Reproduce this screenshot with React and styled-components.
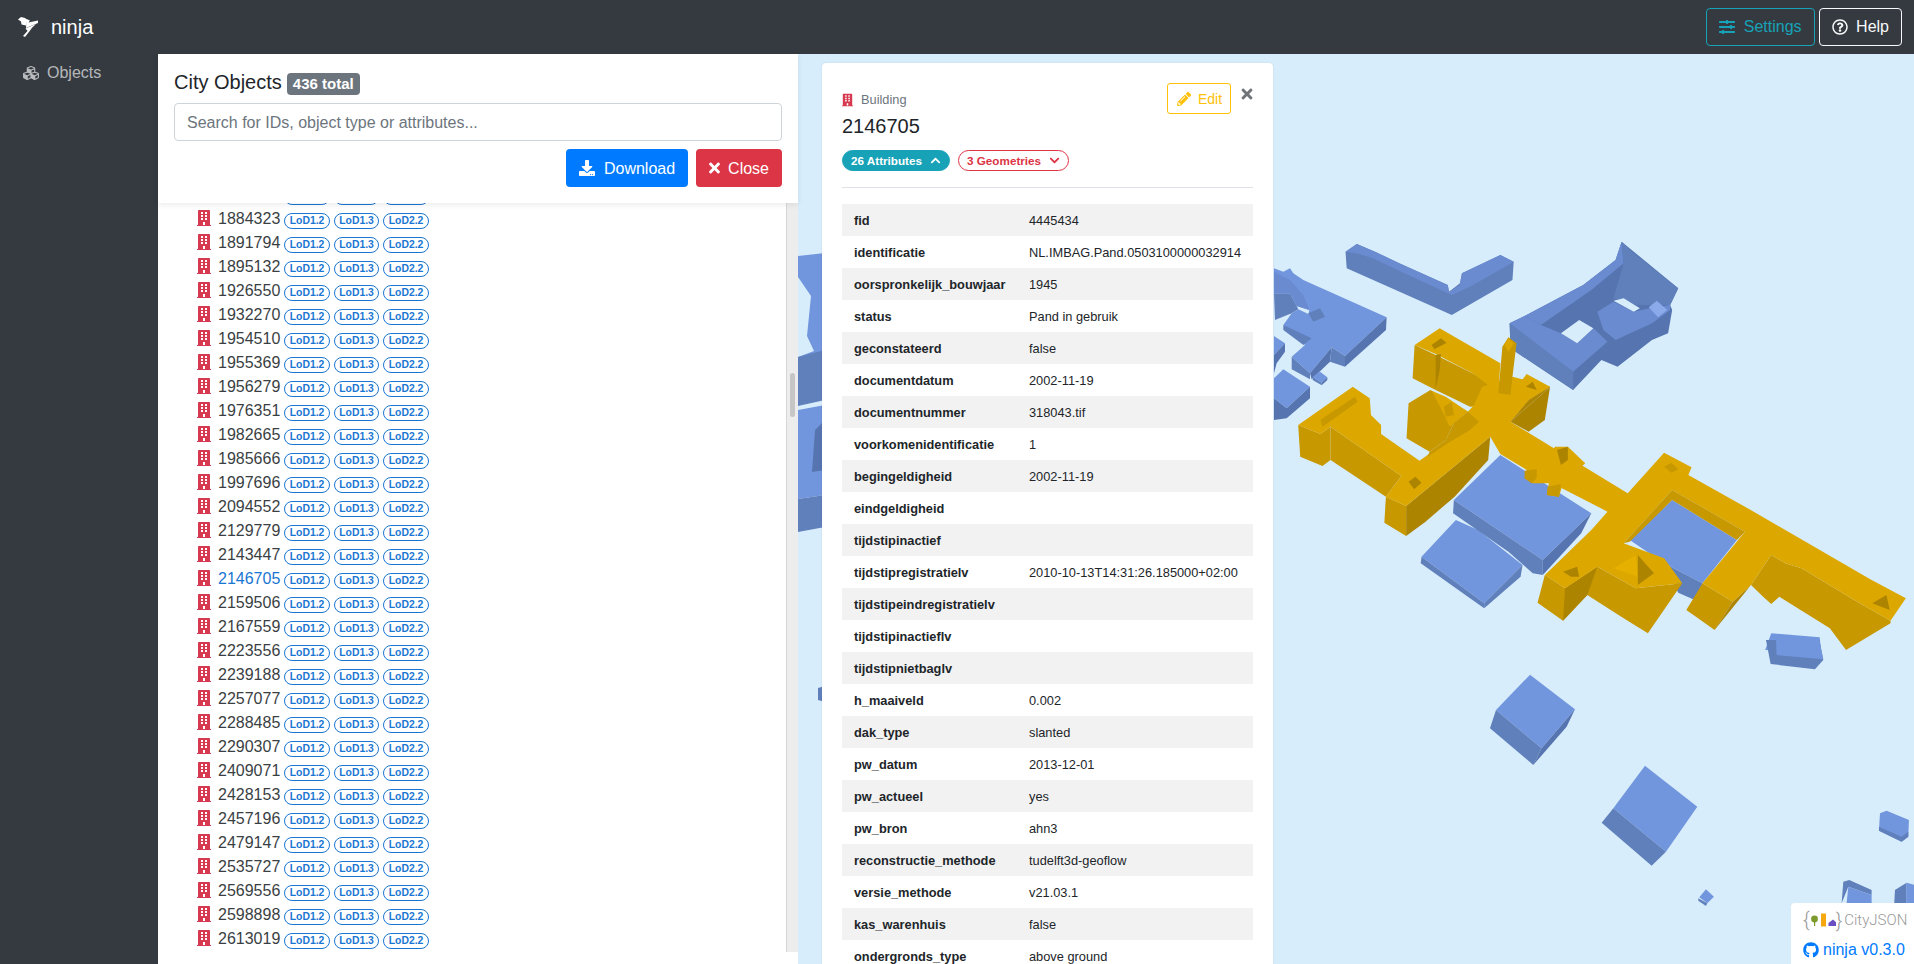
import React from "react";
import styled, { createGlobalStyle } from "styled-components";
import {
  FaBuilding,
  FaChevronDown,
  FaChevronUp,
  FaCubes,
  FaDownload,
  FaGithub,
  FaPencilAlt,
  FaRegQuestionCircle,
  FaSlidersH,
  FaTimes,
} from "react-icons/fa";

const IDS = [
  "1877412", "1884323", "1891794", "1895132", "1926550", "1932270", "1954510", "1955369",
  "1956279", "1976351", "1982665", "1985666", "1997696", "2094552", "2129779", "2143447",
  "2146705", "2159506", "2167559", "2223556", "2239188", "2257077", "2288485", "2290307",
  "2409071", "2428153", "2457196", "2479147", "2535727", "2569556", "2598898", "2613019",
];

const ATTRIBUTES = [
  ["fid", "4445434"],
  ["identificatie", "NL.IMBAG.Pand.0503100000032914"],
  ["oorspronkelijk_bouwjaar", "1945"],
  ["status", "Pand in gebruik"],
  ["geconstateerd", "false"],
  ["documentdatum", "2002-11-19"],
  ["documentnummer", "318043.tif"],
  ["voorkomenidentificatie", "1"],
  ["begingeldigheid", "2002-11-19"],
  ["eindgeldigheid", ""],
  ["tijdstipinactief", ""],
  ["tijdstipregistratielv", "2010-10-13T14:31:26.185000+02:00"],
  ["tijdstipeindregistratielv", ""],
  ["tijdstipinactieflv", ""],
  ["tijdstipnietbaglv", ""],
  ["h_maaiveld", "0.002"],
  ["dak_type", "slanted"],
  ["pw_datum", "2013-12-01"],
  ["pw_actueel", "yes"],
  ["pw_bron", "ahn3"],
  ["reconstructie_methode", "tudelft3d-geoflow"],
  ["versie_methode", "v21.03.1"],
  ["kas_warenhuis", "false"],
  ["ondergronds_type", "above ground"],
];

const SKY = "#d8edfc";
const BLUE_TOP = "#7296dd";
const BLUE_MID = "#6a8bd0";
const BLUE_SIDE = "#6080bc";
const BLUE_DARK = "#5675b0";
const GOLD_TOP = "#dca800";
const GOLD_SIDE = "#c79800";
const GOLD_DARK = "#ad8400";

// left block, 3x crop units
const LEFT_BLOCK = [
  [BLUE_SIDE, "12,190 60,190 80,228 85,238 65,250 15,270"],
  [BLUE_TOP, "12,115 40,125 60,115 70,130 100,150 350,262 225,378 185,352 120,430 65,380 105,345 40,285 65,250 85,238 115,252 118,240 80,228 60,190 12,190"],
  [BLUE_MID, "12,125 60,150 100,195 118,240 80,228 60,190 12,190"],
  [BLUE_SIDE, "115,250 150,235 165,260 130,275"],
  [BLUE_SIDE, "40,285 125,325 100,345 40,300"],
  [BLUE_SIDE, "65,380 120,430 120,448 65,418"],
  [BLUE_DARK, "120,430 185,352 180,395 125,448"],
  [BLUE_SIDE, "185,352 225,378 225,410 180,395"],
  [BLUE_DARK, "225,378 350,262 348,300 225,410"],
  [BLUE_TOP, "128,440 150,425 172,442 155,458"],
  [BLUE_SIDE, "128,440 155,458 155,466 128,450"],
  [BLUE_DARK, "155,458 172,442 172,450 155,466"],
  [BLUE_TOP, "12,318 45,340 12,375"],
  [BLUE_DARK, "12,375 45,340 45,365 20,400 12,430"],
  [BLUE_TOP, "12,445 40,418 120,470 50,535 12,505"],
  [BLUE_DARK, "12,505 50,535 120,470 120,505 50,565 12,570"],
];

// everything right of the card, 1568 wide crop units
const CITY = [
  // long building
  [BLUE_SIDE, "162,65 190,42 235,65 295,100 415,165 418,185 445,160 450,130 545,75 578,95 575,150 425,255 165,115"],
  [BLUE_MID, "162,65 190,42 235,65 295,100 415,165 418,185 445,165 450,130 545,75 578,95 470,170 425,195 300,125 230,85 190,70"],
  // courtyard building top right
  [BLUE_DARK, "568,280 605,258 750,165 830,90 845,35 985,175 965,225 970,240 960,310 920,330 835,410 795,390 725,480 570,355"],
  [BLUE_SIDE, "568,280 725,425 725,480 570,355"],
  [BLUE_MID, "568,280 605,258 645,285 695,310 735,340 775,295 810,335 725,425"],
  [BLUE_MID, "605,258 750,165 830,90 845,35 850,100 770,180 645,285"],
  [BLUE_SIDE, "845,35 875,70 985,175 965,225 880,225 825,205 850,100"],
  [BLUE_MID, "785,245 825,215 875,245 915,235 965,225 965,240 920,280 830,330 800,300"],
  [SKY, "695,310 740,270 775,295 735,340"],
  [SKY, "825,212 850,205 890,235 875,245"],
  ["#8aaaea", "912,232 932,212 958,240 935,262"],
  // courtyard blue
  [BLUE_TOP, "970,810 1130,930 1045,1060 950,1000 865,930"],
  [BLUE_SIDE, "950,1000 1045,1060 1030,1112 985,1088"],
  // lower blue
  [BLUE_TOP, "350,980 435,870 490,900 600,1005 505,1120"],
  [BLUE_SIDE, "350,980 505,1120 505,1135 470,1105 348,1000"],
  [BLUE_SIDE, "600,1005 505,1120 505,1135 595,1040"],
  // centre blue
  [BLUE_TOP, "545,675 770,850 650,990 430,810"],
  [BLUE_SIDE, "430,810 650,990 650,1035 625,1030 565,965 428,850"],
  [BLUE_DARK, "770,850 650,990 650,1035 745,910"],
  // gold walls
  [GOLD_SIDE, "333,345 385,375 480,432 540,480 520,525 470,530 440,512 385,480 328,445"],
  [GOLD_SIDE, "318,520 372,480 465,545 430,580 410,630 370,665 313,625"],
  [GOLD_TOP, "333,345 395,295 545,400 540,490 480,432 385,372"],
  [GOLD_TOP, "375,482 410,500 465,545 420,590 400,540"],
  [GOLD_DARK, "385,375 398,372 395,420 385,476"],
  [GOLD_SIDE, "45,585 100,612 125,590 125,690 105,708 50,680"],
  [GOLD_SIDE, "125,590 300,738 262,800 125,690"],
  [GOLD_SIDE, "262,800 312,828 312,918 258,878"],
  [GOLD_DARK, "312,828 520,620 515,690 432,800 360,875 312,918"],
  [GOLD_DARK, "570,575 660,480 668,470 655,570 615,605"],
  [GOLD_SIDE, "655,1035 705,1075 785,1010 880,1075 995,1060 910,1210 850,1165 760,1095 700,1172 637,1118"],
  [GOLD_DARK, "705,1075 785,1010 760,1095 700,1172"],
  [GOLD_SIDE, "1045,1060 1120,1115 1075,1200 1005,1140"],
  [GOLD_DARK, "1120,1115 1165,1065 1075,1200"],
  [GOLD_SIDE, "1510,1172 1420,1110 1290,1015 1250,1000 1215,975 1165,1065 1195,1100 1215,1122 1235,1100 1360,1195 1400,1260 1510,1180"],
  // gold roof, and the inner wall of its courtyard
  [GOLD_TOP, "45,585 180,470 222,505 225,555 250,585 250,612 345,692 365,675 415,630 470,585 515,550 540,495 575,490 610,432 668,470 615,510 570,575 860,790 950,668 1018,712 1010,735 1150,830 1460,1048 1548,1105 1510,1172 1420,1110 1290,1015 1250,1000 1215,975 1165,1065 1120,1115 1045,1060 1150,905 970,780 850,940 950,985 995,1060 880,1075 785,1010 705,1075 655,1035 770,900 810,845 690,770 610,720 545,672 520,620 312,828 262,800 300,738 125,590 100,612"],
  [GOLD_SIDE, "970,780 1150,905 1130,930 970,810 865,935 850,940"],
  // fills round the crossing, then the tower on top
  [GOLD_SIDE, "370,665 410,630 430,580 465,545 515,550 470,600 415,640 365,680"],
  [GOLD_TOP, "465,545 480,525 500,470 575,440 668,470 615,510 570,575 515,600"],
  [GOLD_DARK, "570,575 615,510 668,470 660,480"],
  [GOLD_SIDE, "540,490 550,350 565,322 585,340 575,440 570,495"],
  [GOLD_TOP, "555,345 565,325 578,340 565,365"],
  [GOLD_SIDE, "100,570 185,500 192,515 105,590"],
  [GOLD_DARK, "375,345 398,325 412,338 382,358"],
  [GOLD_DARK, "318,755 335,740 350,758 332,778"],
  // ornaments over the centre blue
  [GOLD_TOP, "655,700 680,650 712,650 755,700 700,760 690,800 660,795 665,760 625,760 605,745 610,720"],
  [GOLD_SIDE, "605,722 635,718 635,745 622,760 605,745"],
  [GOLD_SIDE, "662,770 695,762 690,800 660,795"],
  [GOLD_DARK, "685,660 712,650 712,690 695,705"],
  [GOLD_SIDE, "950,710 968,698 985,718 968,728"],
  [GOLD_DARK, "700,1025 735,1010 740,1040 720,1040"],
  ["#e5b000", "825,1015 880,975 885,1040"],
  [GOLD_DARK, "885,975 925,1030 885,1065"],
  [GOLD_DARK, "1465,1120 1500,1095 1508,1140"],
  [GOLD_DARK, "608,470 625,455 635,480"],
  [GOLD_SIDE, "405,530 425,515 430,555 410,560"],
  // block under the wing
  [BLUE_TOP, "1215,1210 1335,1222 1338,1260 1200,1260"],
];

// loose buildings lower right, 3x crop units
const SCATTER = [
  [BLUE_TOP, "288,210 390,104 525,208 425,325"],
  [BLUE_SIDE, "288,210 425,325 400,375 270,265"],
  [BLUE_DARK, "525,208 500,260 400,375 425,325"],
  [BLUE_TOP, "640,505 735,377 892,500 798,635"],
  [BLUE_SIDE, "640,505 798,635 755,677 605,548"],
  [BLUE_TOP, "898,772 918,748 942,770 922,790"],
  [BLUE_SIDE, "895,775 922,790 918,798 895,782"],
  [BLUE_SIDE, "1098,0 1258,0 1270,60 1245,88 1112,72"],
  [BLUE_TOP, "1128,-10 1258,0 1270,58 1130,45"],
  [BLUE_TOP, "1440,520 1460,512 1527,540 1525,590 1505,605 1437,572"],
  [BLUE_SIDE, "1437,560 1505,590 1525,575 1525,590 1505,605 1437,572"],
  [BLUE_SIDE, "1330,725 1348,720 1415,750 1415,765 1345,740 1325,790"],
  [BLUE_TOP, "1345,740 1415,765 1415,790 1340,790"],
  [BLUE_SIDE, "1485,750 1520,728 1520,790 1483,790"],
  [BLUE_TOP, "1520,728 1545,735 1545,790 1520,790"],
];

// page coordinates, what shows left of the card
const FRAGMENTS = [
  [BLUE_TOP, "798,256 825,253 825,385 798,380 798,357 814,351 807,336 811,296 798,277"],
  [BLUE_SIDE, "798,357 825,350 825,400 798,406"],
  [BLUE_TOP, "798,410 825,405 825,495 798,499"],
  [BLUE_SIDE, "798,499 825,495 825,527 798,532"],
  [BLUE_DARK, "815,430 825,420 825,470 812,472"],
  [BLUE_SIDE, "818,688 825,686 825,702 818,700"],
];

const Polys = ({ items }) =>
  items.map(([fill, points], i) => <polygon key={i} fill={fill} points={points} />);

export default function App() {
  return (
    <>
      <GlobalStyle />
      <Page>
        <Navbar>
          <Brand>
            <NinjaLogo viewBox="0 0 20 20">
              <path d="M0 2.5 L3 0 L7 1 L9.5 3 L8 8.5 L3.5 7.5 L3 4.5 Z" />
              <path d="M8.5 2 L12 3.5 L10.5 5.5 L20 3.5 L20 6 L8 11 Z" />
              <path d="M7.5 11.5 L18 7 L10 14.5 Z" />
              <path d="M9 14.5 L14 11 L7 20 L5 19 Z" />
            </NinjaLogo>
            ninja
          </Brand>
          <NavActions>
            <NavButton $tone="#17a2b8">
              <FaSlidersH /> Settings
            </NavButton>
            <NavButton $tone="#f8f9fa">
              <FaRegQuestionCircle /> Help
            </NavButton>
          </NavActions>
        </Navbar>
        <Main>
          <Sidebar>
            <SideLink>
              <FaCubes /> Objects
            </SideLink>
          </Sidebar>
          <Panel>
            <PanelHeader>
              <PanelTitle>
                City Objects <CountBadge>436 total</CountBadge>
              </PanelTitle>
              <SearchInput placeholder="Search for IDs, object type or attributes..." readOnly />
              <PanelActions>
                <ActionButton $bg="#007bff" $iconWidth={16} $gap={9}>
                  <FaDownload /> Download
                </ActionButton>
                <ActionButton $bg="#dc3545" $iconWidth={11} $gap={8}>
                  <FaTimes /> Close
                </ActionButton>
              </PanelActions>
            </PanelHeader>
            <PanelBody>
              <ListClip>
                <ObjectList>
                  {IDS.map((id) => (
                    <ObjectRow key={id}>
                      <FaBuilding />
                      <ObjectId $active={id === "2146705"}>{id}</ObjectId>
                      <LodBadge>LoD1.2</LodBadge>
                      <LodBadge>LoD1.3</LodBadge>
                      <LodBadge>LoD2.2</LodBadge>
                    </ObjectRow>
                  ))}
                </ObjectList>
              </ListClip>
              <ScrollTrack>
                <ScrollThumb />
              </ScrollTrack>
            </PanelBody>
          </Panel>
          <MapPane>
            <CityDrawing viewBox="798 54 1116 910">
              <Polys items={FRAGMENTS} />
              <g transform="translate(1270 230) scale(.3333)">
                <Polys items={LEFT_BLOCK} />
              </g>
              <g transform="translate(1280 230) scale(.4043 .3333)">
                <Polys items={CITY} />
              </g>
              <g transform="translate(1400 640) scale(.3333)">
                <Polys items={SCATTER} />
              </g>
            </CityDrawing>
            <InfoCard>
              <CardHeader>
                <div>
                  <TypeRow>
                    <FaBuilding /> Building
                  </TypeRow>
                  <ObjectName>2146705</ObjectName>
                </div>
                <CardTools>
                  <EditButton>
                    <FaPencilAlt /> Edit
                  </EditButton>
                  <CardClose>
                    <FaTimes />
                  </CardClose>
                </CardTools>
              </CardHeader>
              <Pills>
                <Pill $solid $color="#17a2b8">
                  26 Attributes <FaChevronUp />
                </Pill>
                <Pill $color="#dc3545">
                  3 Geometries <FaChevronDown />
                </Pill>
              </Pills>
              <Divider />
              <AttributeTable>
                <tbody>
                  {ATTRIBUTES.map(([name, value]) => (
                    <tr key={name}>
                      <th>{name}</th>
                      <td>{value}</td>
                    </tr>
                  ))}
                </tbody>
              </AttributeTable>
            </InfoCard>
            <Credits>
              <CityJsonLogo>
                <Brace>{"{"}</Brace>
                <svg width="26" height="16" viewBox="0 0 26 16">
                  <circle cx="4.5" cy="7" r="3.4" fill="#7d9b2c" />
                  <rect x="4" y="8" width="1.2" height="6" fill="#7d9b2c" />
                  <rect x="11" y="1.5" width="5" height="13" fill="#f5a80f" />
                  <path d="M18.5 14 V11 L23 7.5 L27 11 V14 Z" fill="#6a4fc4" />
                </svg>
                <Brace>{"}"}</Brace>
                <CityJsonName>CityJSON</CityJsonName>
              </CityJsonLogo>
              <VersionLink>
                <FaGithub /> ninja v0.3.0
              </VersionLink>
            </Credits>
          </MapPane>
        </Main>
      </Page>
    </>
  );
}

const GlobalStyle = createGlobalStyle`
  html, body {
    margin: 0;
    height: 100%;
    overflow: hidden;
  }
  body {
    font-family: "Liberation Sans", Arial, sans-serif;
    font-size: 16px;
    color: #212529;
  }
  * {
    box-sizing: border-box;
  }
`;

const Page = styled.div`
  display: flex;
  flex-direction: column;
  height: 964px;
  overflow: hidden;
`;

const Navbar = styled.header`
  flex: 0 0 54px;
  display: flex;
  align-items: center;
  justify-content: space-between;
  padding: 0 12px 0 18px;
  background: #343a40;
`;

const Brand = styled.div`
  display: flex;
  align-items: center;
  gap: 13px;
  color: #fff;
  font-size: 20px;
`;

const NinjaLogo = styled.svg`
  width: 20px;
  height: 20px;
  fill: #fff;
`;

const NavActions = styled.div`
  display: flex;
  gap: 4px;
`;

const NavButton = styled.div`
  display: flex;
  align-items: center;
  gap: 8.5px;
  height: 38px;
  padding: 0 12px;
  border: 1px solid ${(p) => p.$tone};
  border-radius: 4px;
  color: ${(p) => p.$tone};
  svg {
    width: 16px;
    height: 16px;
  }
`;

const Main = styled.div`
  flex: 1;
  display: flex;
  min-height: 0;
`;

const Sidebar = styled.nav`
  flex: 0 0 158px;
  padding: 9px 23px;
  background: #343a40;
`;

const SideLink = styled.div`
  display: flex;
  align-items: center;
  gap: 8px;
  height: 20px;
  color: rgba(255, 255, 255, 0.65);
  svg {
    width: 16px;
    height: 16px;
  }
`;

const Panel = styled.section`
  flex: 0 0 640px;
  display: flex;
  flex-direction: column;
  min-height: 0;
  background: #fff;
`;

const PanelHeader = styled.div`
  position: relative;
  z-index: 1;
  flex: 0 0 149px;
  padding: 16px 16px 0;
  background: #fff;
  box-shadow: 0 2px 6px rgba(0, 0, 0, 0.08);
`;

const PanelTitle = styled.h2`
  display: flex;
  align-items: center;
  gap: 5px;
  margin: 0 0 8px;
  height: 25px;
  font-size: 20px;
  font-weight: 400;
`;

const CountBadge = styled.span`
  height: 22px;
  padding: 0 6px;
  margin-top: 3px;
  border-radius: 4px;
  background: #6c757d;
  color: #fff;
  font-size: 15px;
  line-height: 22px;
  font-weight: 700;
`;

const SearchInput = styled.input`
  display: block;
  width: 100%;
  height: 38px;
  padding: 2px 12px 0;
  border: 1px solid #ced4da;
  border-radius: 4px;
  font: inherit;
  color: #495057;
  &::placeholder {
    color: #6c757d;
    opacity: 1;
  }
`;

const PanelActions = styled.div`
  display: flex;
  justify-content: flex-end;
  gap: 8px;
  margin-top: 8px;
`;

const ActionButton = styled.div`
  display: flex;
  align-items: center;
  gap: ${(p) => p.$gap}px;
  height: 38px;
  padding: 2px 13px 0;
  border-radius: 4px;
  background: ${(p) => p.$bg};
  color: #fff;
  svg {
    width: ${(p) => p.$iconWidth}px;
    height: 16px;
    margin-top: -2px;
  }
`;

const PanelBody = styled.div`
  flex: 1;
  display: flex;
  min-height: 0;
  padding-bottom: 12px;
`;

const ListClip = styled.div`
  flex: 1;
  min-width: 0;
  overflow: hidden;
`;

const ObjectList = styled.div`
  margin-top: -21px;
  padding-left: 39px;
`;

const ObjectRow = styled.div`
  display: flex;
  align-items: center;
  height: 24px;
  > svg {
    width: 14px;
    height: 16px;
    color: #d63a50;
  }
`;

const ObjectId = styled.span`
  margin: 0 4px 0 7px;
  padding-top: 2px;
  color: ${(p) => (p.$active ? "#1a76d2" : "#3a3f44")};
`;

const LodBadge = styled.span`
  width: 45.5px;
  height: 16px;
  margin: 6px 4px 0 0;
  border: 1px solid #1a76d2;
  border-radius: 10px;
  color: #1a76d2;
  font-size: 10.4px;
  line-height: 14px;
  font-weight: 700;
  text-align: center;
`;

const ScrollTrack = styled.div`
  flex: 0 0 11px;
  padding: 170px 3px 0;
  background: #ededed;
  border-left: 1px solid #d6d6d6;
`;

const ScrollThumb = styled.div`
  width: 5px;
  height: 44px;
  border-radius: 3px;
  background: #c6c6c6;
`;

const MapPane = styled.main`
  position: relative;
  flex: 1;
  min-width: 0;
  overflow: hidden;
  background: ${SKY};
`;

const CityDrawing = styled.svg`
  display: block;
  width: 100%;
  height: 100%;
`;

const InfoCard = styled.article`
  position: absolute;
  top: 9px;
  left: 24px;
  width: 451px;
  padding: 20px;
  border-radius: 4px;
  background: #fff;
  box-shadow: 0 0 2px rgba(0, 0, 0, 0.12);
`;

const CardHeader = styled.div`
  display: flex;
  justify-content: space-between;
  align-items: flex-start;
`;

const TypeRow = styled.div`
  display: flex;
  align-items: center;
  gap: 8px;
  margin-top: 7px;
  color: #6c757d;
  font-size: 12.8px;
  line-height: 19px;
  svg {
    width: 11px;
    height: 14px;
    color: #d63a50;
  }
`;

const ObjectName = styled.div`
  margin-top: 5px;
  font-size: 20px;
  line-height: 24px;
`;

const CardTools = styled.div`
  display: flex;
  align-items: flex-start;
  gap: 10px;
`;

const EditButton = styled.div`
  display: flex;
  align-items: center;
  gap: 7px;
  width: 64px;
  height: 31px;
  padding-left: 9px;
  border: 1px solid #ffc107;
  border-radius: 3px;
  color: #ffc107;
  font-size: 14px;
  svg {
    width: 14px;
    height: 14px;
  }
`;

const CardClose = styled.div`
  display: flex;
  color: #6f7479;
  margin-top: 3px;
  svg {
    width: 12px;
    height: 16px;
  }
`;

const Pills = styled.div`
  display: flex;
  gap: 8px;
  margin-top: 12px;
`;

const Pill = styled.div`
  display: flex;
  align-items: center;
  justify-content: space-between;
  height: 21px;
  padding: 0 8px;
  gap: 8px;
  border: 1px solid ${(p) => p.$color};
  border-radius: 11px;
  background: ${(p) => (p.$solid ? p.$color : "#fff")};
  color: ${(p) => (p.$solid ? "#fff" : p.$color)};
  font-size: 11.7px;
  font-weight: 700;
  svg {
    width: 11px;
    height: 11px;
  }
`;

const Divider = styled.hr`
  height: 1px;
  margin: 16px 0;
  border: 0;
  background: #dee2e6;
`;

const AttributeTable = styled.table`
  width: 100%;
  table-layout: fixed;
  border-collapse: collapse;
  font-size: 12.8px;
  line-height: 19.2px;
  tr:nth-child(odd) {
    background: #f2f2f2;
  }
  th,
  td {
    height: 32px;
    padding: 2px 12px 0;
    text-align: left;
    white-space: nowrap;
  }
  th {
    width: 175px;
    font-weight: 700;
  }
`;

const Credits = styled.aside`
  position: absolute;
  right: 0;
  bottom: 0;
  width: 123px;
  height: 61px;
  padding: 7px 0 0 12px;
  border-top-left-radius: 4px;
  background: #fff;
`;

const CityJsonLogo = styled.div`
  display: flex;
  align-items: center;
  height: 20px;
  color: #999;
`;

const Brace = styled.span`
  font-family: Roboto, sans-serif;
  font-weight: 300;
  font-size: 20px;
  line-height: 20px;
`;

const CityJsonName = styled.span`
  margin-left: 2px;
  font-family: Roboto, sans-serif;
  font-weight: 300;
  font-size: 15px;
`;

const VersionLink = styled.div`
  display: flex;
  align-items: center;
  gap: 4px;
  margin-top: 11px;
  color: #007bff;
  white-space: nowrap;
  svg {
    width: 16px;
    height: 16px;
  }
`;
